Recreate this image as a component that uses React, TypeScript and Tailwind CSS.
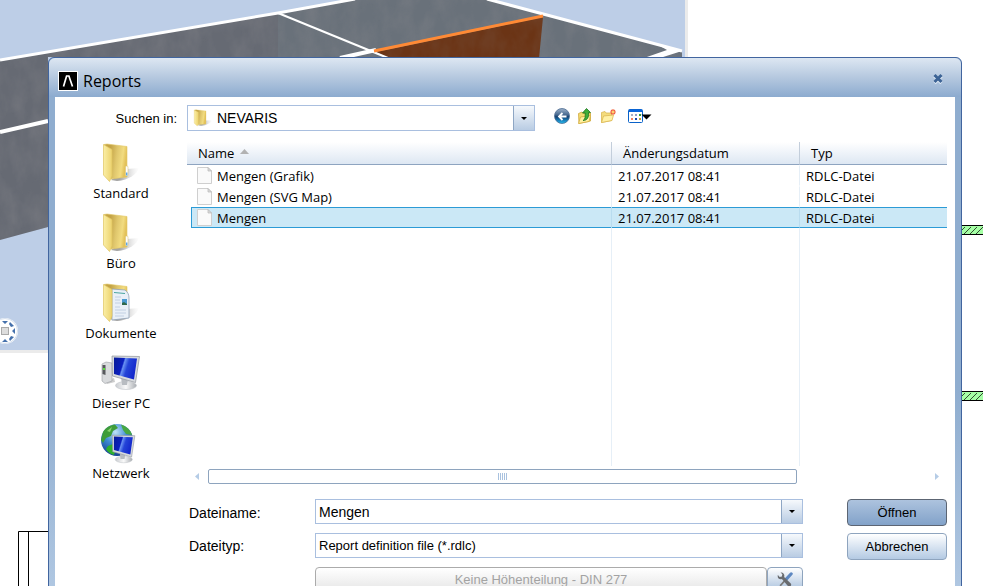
import { useState } from "react";
import type { ReactNode } from "react";

interface ReportFile {
  name: string;
  modified: string;
  type: string;
}

const FILES: ReportFile[] = [
  { name: "Mengen (Grafik)", modified: "21.07.2017 08:41", type: "RDLC-Datei" },
  { name: "Mengen (SVG Map)", modified: "21.07.2017 08:41", type: "RDLC-Datei" },
  { name: "Mengen", modified: "21.07.2017 08:41", type: "RDLC-Datei" },
];

const ARIAL = "font-['Liberation_Sans',sans-serif]";
const SEGOE = "font-['Open_Sans','Noto_Sans',sans-serif]";

/* ---------- canvas behind the dialog ---------- */

function ModelViewport() {
  return (
    <svg className="absolute left-0 top-0" width="688" height="353" viewBox="0 0 688 353" aria-hidden="true">
      <defs>
        <filter id="concrete" x="0" y="0" width="100%" height="100%">
          <feTurbulence type="fractalNoise" baseFrequency="0.06 0.035" numOctaves="4" seed="4" />
          <feColorMatrix values="0 0 0 0 0.25  0 0 0 0 0.25  0 0 0 0 0.27  0.6 0 0 0 -0.2" />
          <feComposite in2="SourceGraphic" operator="in" />
        </filter>
      </defs>
      <rect width="688" height="353" fill="#ebebeb" />
      <rect width="685" height="350" fill="#bdcee7" />
      <path d="M0 60 355 0H487L682 52V57H48V227L0 240Z" fill="#666a73" />
      <path d="M278 14 355 0H487L682 52V57H278Z" fill="#69717a" />
      <path d="M0 60 355 0H487L682 52V57H48V227L0 240Z" filter="url(#concrete)" />
      <path d="M376 52 543 17 539 58H388Z" fill="#6b3415" />
      <path d="M376 52 543 17 539 58H388Z" filter="url(#concrete)" opacity=".4" />
      <path d="M0 60 278 13 355-1M487-1 682 51" stroke="#fff" strokeWidth="3" fill="none" />
      <path d="M278 13 388 58" stroke="#fff" strokeWidth="2" fill="none" />
      <path d="M340 58 376 50M0 132 48 121" stroke="#fff" strokeWidth="4" fill="none" />
      <path d="M644 58 667 50 660 46 682 51 660 58Z" fill="#fff" />
      <path d="M374 51 543 16" stroke="#ff8a35" strokeWidth="3" />
      <circle cx="5" cy="331" r="13" fill="#fff" />
      <circle cx="5" cy="331" r="12.5" fill="none" stroke="#d5e0ee" />
      <rect x="1.500" y="327.500" width="7" height="7" fill="#ddd" stroke="#aaa" />
      <path d="M2 321h6l-3 3zM2 342h6l-3-3zM15 328v6l-3-3zM10 322l4 4-3 1-2-3zM10 341l4-4-3-1-2 3z" fill="#4571ac" />
    </svg>
  );
}

function HatchedWall() {
  return (
    <svg className="block" width="22" height="10" viewBox="0 0 22 10" aria-hidden="true">
      <path d="M0 0H22V10H0Z" fill="#a5ffa5" />
      <path d="M0 .5H22M0 9.500H22" stroke="#000" />
      <path d="M1 5 4 2M3 9 10 2M9 9 16 2M15 9 22 2" stroke="#000" strokeWidth=".7" fill="none" />
    </svg>
  );
}

function PlanCorner() {
  return (
    <svg className="absolute left-[18px] top-[531px]" width="31" height="60" aria-hidden="true">
      <path d="M31 .5H.5V60M10.500 0V60" stroke="#000" fill="none" />
    </svg>
  );
}

/* ---------- icons ---------- */

function AppLogo() {
  return (
    <svg width="20" height="20" viewBox="0 0 20 20" aria-hidden="true">
      <rect width="20" height="20" fill="#fff" />
      <rect x="1" y="1" width="18" height="18" fill="#000" />
      <path d="M5.500 15.500 8.600 5h2.300l3.600 10.500" stroke="#fff" strokeWidth="1.700" fill="none" />
    </svg>
  );
}

function FolderShapes({ children }: { children?: ReactNode }) {
  return (
    <>
      <defs>
        <linearGradient id="folderFront" x1="0" x2="1">
          <stop offset="0" stopColor="#fbefa6" />
          <stop offset="1" stopColor="#ecd26d" />
        </linearGradient>
        <linearGradient id="folderBack" x1="0" x2="1" y2=".2">
          <stop offset=".3" stopColor="#c4a447" />
          <stop offset=".6" stopColor="#e0c76d" />
          <stop offset=".85" stopColor="#f2dc80" />
          <stop offset="1" stopColor="#e3c25a" />
        </linearGradient>
        <linearGradient id="folderShade" x1="0" x2="1">
          <stop offset=".3" stopColor="#666" stopOpacity=".6" />
          <stop offset="1" stopColor="#bbb" stopOpacity="0" />
        </linearGradient>
      </defs>
      <path d="M14 38 30 27 42 26C40 32 32 38 20 39Z" fill="url(#folderShade)" />
      <path d="M7 2.500 10 2 30 4.500V35L14 37Z" fill="url(#folderBack)" stroke="#e3c866" strokeWidth=".6" />
      {children}
      <path d="M6.500 2.500 15 7.500V34L12.500 39.500 6.500 33Z" fill="url(#folderFront)" stroke="#dfc462" strokeWidth=".7" />
    </>
  );
}

function FolderIcon() {
  return (
    <svg width="48" height="42" viewBox="0 0 48 42" aria-hidden="true">
      <FolderShapes>
        <rect x="28.500" y="24" width="2.500" height="10" rx="1" fill="#fff" stroke="#d8c06a" strokeWidth=".5" />
        <path d="M29.700 30.500v3" stroke="#5ba5e8" strokeWidth="1.500" />
      </FolderShapes>
    </svg>
  );
}

function DocumentsIcon() {
  return (
    <svg width="48" height="42" viewBox="0 0 48 42" aria-hidden="true">
      <FolderShapes>
        <path d="M15 7 28 8C31 10 32 13 32 16V36L15 38Z" fill="#e9f0f8" stroke="#8fa1b6" strokeWidth=".8" />
        <path d="M17 10.500 28 11.500" stroke="#4ba6a0" />
        <path d="M18 15h6M18 18h5M18 21h6M18 28h11M18 31h11M18 34h9M18 25h5" stroke="#b7c8dd" strokeWidth=".8" />
        <path d="M25 17h5v6h-5z" fill="#4b9ad1" />
        <path d="M25 21 27 20 30 22V23H25Z" fill="#30694c" />
      </FolderShapes>
    </svg>
  );
}

function MonitorShapes() {
  return (
    <>
      <defs>
        <linearGradient id="screen" x1="0" x2="1" y2=".3">
          <stop offset="0" stopColor="#081c96" />
          <stop offset=".42" stopColor="#0b1fc0" />
          <stop offset=".48" stopColor="#6a92f2" />
          <stop offset=".65" stopColor="#2444d8" />
          <stop offset="1" stopColor="#1428cc" />
        </linearGradient>
        <linearGradient id="stand" x1="0" x2="1">
          <stop offset="0" stopColor="#c9ccd0" />
          <stop offset=".5" stopColor="#fafafa" />
          <stop offset="1" stopColor="#a9adb2" />
        </linearGradient>
      </defs>
      <ellipse cx="29" cy="33.500" rx="10.500" ry="4" fill="url(#stand)" stroke="#bfc3c8" strokeWidth=".6" />
      <path d="M24 25 31 26 30 33H25Z" fill="#b8bcc1" />
      <path d="M15 4 42.500 4.500 38.500 30.500 15.500 24Z" fill="#d7dade" stroke="#8f949b" strokeWidth=".7" />
      <path d="M17 5.500 40 6.500 37 27.500 17 22Z" fill="url(#screen)" />
    </>
  );
}

function ComputerIcon() {
  return (
    <svg width="48" height="42" viewBox="0 0 48 42" aria-hidden="true">
      <path d="M8 29 17 26 18 30 10 32Z" fill="#ccc" />
      <path d="M5 12 9 10 15 11V29L8 31.500 5 29Z" fill="#d9dbdd" stroke="#9b9ea2" strokeWidth=".6" />
      <path d="M5.500 13 8.500 13V23L5.500 22Z" fill="#57595c" />
      <path d="M6 17h2" stroke="#58e03c" strokeWidth="2" />
      <MonitorShapes />
    </svg>
  );
}

function NetworkIcon() {
  return (
    <svg width="48" height="42" viewBox="0 0 48 42" aria-hidden="true">
      <defs>
        <radialGradient id="globe" cx=".45" cy=".25" r=".8">
          <stop offset="0" stopColor="#bfe3f8" />
          <stop offset=".45" stopColor="#3f8bd4" />
          <stop offset="1" stopColor="#123a86" />
        </radialGradient>
      </defs>
      <circle cx="20" cy="18" r="16" fill="url(#globe)" />
      <path d="M6 10C9 5 14 3 18 2.500L21 6 16 9 14 14 9 16 6 21 4 18Z" fill="#3f9d3a" />
      <path d="M24 2.500C29 4 34 8 35 13L29 12 26 8Z" fill="#48a843" />
      <path d="M11 24 16 22 19 26 17 33C13 32 10 29 9 27Z" fill="#2fb12c" />
      <path d="M10 9 15 5 13 10Z" fill="#8bd56f" />
      <g transform="translate(3 10) scale(.82)">
        <MonitorShapes />
      </g>
    </svg>
  );
}

function SmallFolderIcon() {
  return (
    <svg width="22" height="18" viewBox="2 0 44 42" preserveAspectRatio="none" aria-hidden="true">
      <FolderShapes />
    </svg>
  );
}

function FileIcon() {
  return (
    <svg className="shrink-0" width="16" height="17" viewBox="0 0 16 17" aria-hidden="true">
      <path d="M.5.500H11L14.500 4V16.500H.5Z" fill="#fafafa" stroke="#cfcfcf" />
      <path d="M11 .5V4h3.500Z" fill="#ddd" stroke="#b5b5b5" strokeWidth=".7" />
    </svg>
  );
}

function BackIcon() {
  return (
    <svg width="16" height="16" viewBox="0 0 16 16" aria-hidden="true">
      <defs>
        <linearGradient id="backBall" y2="1" x2="0">
          <stop offset="0" stopColor="#9fb3cb" />
          <stop offset=".42" stopColor="#48698f" />
          <stop offset=".55" stopColor="#154070" />
          <stop offset=".75" stopColor="#1673ad" />
          <stop offset="1" stopColor="#27c0f5" />
        </linearGradient>
      </defs>
      <circle cx="8" cy="8" r="7.500" fill="url(#backBall)" stroke="#4a6b92" strokeWidth=".8" />
      <path d="M12.500 8.500H5M8.500 5 5 8.500 8.500 12" stroke="#fff" strokeWidth="1.800" fill="none" />
    </svg>
  );
}

function UpIcon() {
  return (
    <svg width="16" height="16" viewBox="0 0 16 16" aria-hidden="true">
      <path d="M1.500 5.500 5 4 6 5.500 13.500 5V13L2 15.500Z" fill="#f3dc71" stroke="#cfa73c" strokeWidth=".8" />
      <path d="M1.500 15.500 3.500 9 13.500 7.500 12 13.500Z" fill="#fff0a0" stroke="#d3ac3f" strokeWidth=".8" />
      <path d="M6 12.500C8.500 11.500 8.200 8 8.200 5H5.500L9.500.500 13.500 4.500H11.500C12 9 10.500 12.500 6 12.500Z" fill="#3fae38" stroke="#1c7420" strokeWidth=".8" />
    </svg>
  );
}

function NewFolderIcon() {
  return (
    <svg width="16" height="16" viewBox="0 0 16 16" aria-hidden="true">
      <path d="M1.500 14.500V4.500L5 3.500 6 5H11.500V12.500Z" fill="#f4dc7c" stroke="#d9b756" strokeWidth=".8" />
      <path d="M1.500 14.500 3.500 8 13.500 7 12 12.500Z" fill="#fff1a6" stroke="#dcb853" strokeWidth=".8" />
      <path d="M13 1v6M10 4h6M11 2l4 4M15 2l-4 4" stroke="#f0603a" strokeWidth="1.100" />
      <circle cx="13" cy="4" r="1.200" fill="#ffd76b" />
    </svg>
  );
}

function ViewsIcon() {
  return (
    <svg width="24" height="16" viewBox="0 0 24 16" aria-hidden="true">
      <rect x=".5" y="1.500" width="14" height="13" rx="1" fill="#fff" stroke="#0a62c9" />
      <path d="M1 1.500H14V4H1Z" fill="#0a66dc" />
      <path d="M3 6h2v2H3z" fill="#a9afc4" />
      <path d="M7 6h2v2H7z" fill="#8d9fc9" />
      <path d="M11 6h2v2H11z" fill="#2f9f3a" />
      <path d="M3 10h2v2H3z" fill="#f07f62" />
      <path d="M7 10h2v2H7z" fill="#1748b0" />
      <path d="M11 10h2v2H11z" fill="#c2a13a" />
      <path d="M13.500 6.500H23.500L18.500 11.500Z" fill="#000" />
    </svg>
  );
}

function ToolsIcon() {
  return (
    <svg width="16" height="18" viewBox="0 0 18 18" aria-hidden="true">
      <path d="M16 2 10.500 8" stroke="#5d88c2" strokeWidth="3.500" strokeLinecap="round" />
      <path d="M9.500 9 3.500 15.500" stroke="#777" strokeWidth="2" />
      <path d="M1 3.500 3 5.500 5.500 5 6 2.500 4 .500C7 0 9 2.500 8 5.500L15.500 13C17 15 14.500 17.500 12.500 16L5.500 8C2.500 9 0 6.500 1 3.500Z" fill="#686b6f" />
    </svg>
  );
}

function DownArrow() {
  return (
    <svg width="6" height="3" viewBox="0 0 6 3" aria-hidden="true">
      <path d="M0 0H6L3 3Z" fill="#000" />
    </svg>
  );
}

const PLACES = [
  { label: "Standard", icon: <FolderIcon /> },
  { label: "Büro", icon: <FolderIcon /> },
  { label: "Dokumente", icon: <DocumentsIcon /> },
  { label: "Dieser PC", icon: <ComputerIcon /> },
  { label: "Netzwerk", icon: <NetworkIcon /> },
];

const TOOLS = [
  { label: "Zurück", icon: <BackIcon /> },
  { label: "Übergeordneter Ordner", icon: <UpIcon /> },
  { label: "Neuer Ordner", icon: <NewFolderIcon /> },
];

const ARROW_BOX =
  "flex w-[21px] items-center justify-center border-l border-[#8ea6c4] bg-linear-to-b from-[#f6f9fc] to-[#b9cce3]";

/* ---------- dialog parts ---------- */

function FileTable({ selected, onSelect }: { selected: string; onSelect: (name: string) => void }) {
  const headCell = "h-[23px] border-b border-[#8ea4c0] p-0 text-left font-normal";
  return (
    <table className={`w-full table-fixed border-separate border-spacing-0 text-[13px] leading-4 ${SEGOE}`}>
      <colgroup>
        <col />
        <col className="w-[188px]" />
        <col className="w-[147px]" />
      </colgroup>
      <thead className="bg-linear-to-b from-white to-[#dce6f2]">
        <tr>
          <th className={`${headCell} border-r border-r-[#c3cedb] pl-[11px]`}>
            <span className="flex items-center gap-1.5">
              Name
              <svg className="mb-1" width="9" height="5" aria-hidden="true">
                <path d="M0 5 4.500 0 9 5Z" fill="#b2b2b2" />
              </svg>
            </span>
          </th>
          <th className={`${headCell} border-r border-r-[#c3cedb] pl-[11px]`}>Änderungsdatum</th>
          <th className={`${headCell} pl-[11px]`}>Typ</th>
        </tr>
      </thead>
      <tbody>
        {FILES.map((file) => {
          const active = file.name === selected;
          const cell = active ? "border-y border-y-[#2c9bd6] bg-[#cbe8f6]" : "border-y border-y-transparent";
          const divider = active ? "border-r-[#b9dcef]" : "border-r-[#e6eff7]";
          return (
            <tr key={file.name} onClick={() => onSelect(file.name)} aria-selected={active}>
              <td className={`border-r py-0 pl-1 pr-0 ${divider}`}>
                <div className={`flex h-[21px] items-center gap-1 border-l pl-[5px] ${cell} ${active ? "border-l-[#2c9bd6]" : "border-l-transparent"}`}>
                  <FileIcon />
                  {file.name}
                </div>
              </td>
              <td className={`h-[21px] border-r py-0 pl-1.5 pr-0 ${divider} ${cell}`}>{file.modified}</td>
              <td className={`h-[21px] py-0 pl-1.5 pr-0 ${cell}`}>{file.type}</td>
            </tr>
          );
        })}
        <tr aria-hidden="true">
          <td className="h-[238px] border-r border-[#e6eff7] p-0" />
          <td className="border-r border-[#e6eff7] p-0" />
          <td className="p-0" />
        </tr>
      </tbody>
    </table>
  );
}

function HorizontalScroll() {
  return (
    <div className="mt-[3px] flex h-[15px] items-center pl-2 pr-2">
      <svg width="4" height="7" aria-hidden="true">
        <path d="M4 0V7L0 3.500Z" fill="#b5cce6" />
      </svg>
      <div className="ml-[9px] mr-[138px] flex h-[15px] flex-1 items-center justify-center gap-px rounded-xs border border-[#8ea4be] bg-white">
        {[0, 1, 2, 3, 4].map((n) => (
          <span key={n} className="h-[7px] w-px bg-[#a9c2df]" />
        ))}
      </div>
      <svg width="4" height="7" aria-hidden="true">
        <path d="M0 0V7L4 3.500Z" fill="#b5cce6" />
      </svg>
    </div>
  );
}

export default function App() {
  const [fileName, setFileName] = useState("Mengen");

  return (
    <main className="relative h-screen overflow-hidden bg-white pl-12 pr-[21px] pt-[57px] text-black">
      <ModelViewport />
      <PlanCorner />
      <div className="absolute right-0 top-[225px] flex flex-col gap-[156px]">
        <HatchedWall />
        <HatchedWall />
      </div>

      <section
        role="dialog"
        aria-labelledby="dialog-title"
        className="relative rounded-t-md border border-[#41659f] bg-linear-to-b from-[#8fadcf] from-55% to-[#bbd0e8] px-1.5"
      >
        <header className="-mx-1.5 flex h-[39px] items-center rounded-t-md bg-linear-to-b from-[#dde7f2] via-[#b5c8df] to-[#8cabcf] pl-[9px] pr-[17px] pt-[7px]">
          <AppLogo />
          <h1 id="dialog-title" className={`ml-[5px] flex-1 text-[16px] leading-6 ${SEGOE}`}>
            Reports
          </h1>
          <button type="button" aria-label="Schließen" className="mb-1">
            <svg width="12" height="12" viewBox="0 0 12 12" aria-hidden="true">
              <path d="M2.500 3 9.500 10M9.500 3 2.500 10" stroke="#dfe9f4" strokeWidth="3.500" />
              <path d="M2.500 2 9.500 9M9.500 2 2.500 9" stroke="#3d6496" strokeWidth="3" />
            </svg>
          </button>
        </header>

        <div className={`h-[560px] bg-white pr-2 pt-2 text-[13px] leading-4 ${ARIAL}`}>
          <div className="flex h-[26px] items-center">
            <label htmlFor="look-in" className="w-[132px] pr-2.5 pt-0.5 text-right">
              Suchen in:
            </label>
            <div className="relative flex h-[26px] w-[348px] border border-[#a9bfdf]">
              <select id="look-in" className="w-full appearance-none bg-white pl-[29px] text-[14px] outline-none">
                <option>NEVARIS</option>
              </select>
              <span className="pointer-events-none absolute left-1 top-[3px]">
                <SmallFolderIcon />
              </span>
              <span className={`pointer-events-none absolute inset-y-0 right-0 ${ARROW_BOX}`}>
                <DownArrow />
              </span>
            </div>
            <div className="ml-[19px] flex items-center gap-[7px] pb-1">
              {TOOLS.map((tool) => (
                <button key={tool.label} type="button" aria-label={tool.label}>
                  {tool.icon}
                </button>
              ))}
              <button type="button" aria-label="Ansichten" className="ml-[5px]">
                <ViewsIcon />
              </button>
            </div>
          </div>

          <div className="mt-[11px] flex">
            <nav className={`flex w-[132px] shrink-0 flex-col gap-2.5 ${SEGOE}`}>
              {PLACES.map((place) => (
                <button key={place.label} type="button" className="flex flex-col items-center leading-[18px]">
                  {place.icon}
                  {place.label}
                </button>
              ))}
            </nav>

            <div className="min-w-0 flex-1">
              <FileTable selected={fileName} onSelect={setFileName} />
              <HorizontalScroll />

              <div className="mt-[15px] flex items-start gap-11 pl-0.5">
                <div className="grid flex-1 grid-cols-[126px_1fr] items-center gap-y-[9px]">
                  <label htmlFor="file-name" className="pt-0.5 text-[14px]">
                    Dateiname:
                  </label>
                  <div className="flex h-[25px] border border-[#a9bfdf]">
                    <input
                      id="file-name"
                      value={fileName}
                      onChange={(e) => setFileName(e.target.value)}
                      className="min-w-0 flex-1 px-[3px] text-[14px] outline-none"
                    />
                    <button type="button" aria-label="Dateinamen anzeigen" className={ARROW_BOX}>
                      <DownArrow />
                    </button>
                  </div>

                  <label htmlFor="file-type" className="text-[14px]">
                    Dateityp:
                  </label>
                  <div className="relative flex h-[25px] border border-[#a9bfdf]">
                    <select id="file-type" className="w-full appearance-none bg-white pl-[3px] outline-none">
                      <option>Report definition file (*.rdlc)</option>
                    </select>
                    <span className={`pointer-events-none absolute inset-y-0 right-0 ${ARROW_BOX}`}>
                      <DownArrow />
                    </span>
                  </div>

                  <div className="col-start-2 flex h-[25px]">
                    <button
                      type="button"
                      disabled
                      className="flex-1 rounded-sm border border-[#ababab] bg-linear-to-b from-white to-[#e6e6e6] text-[#a3a3a3]"
                    >
                      Keine Höhenteilung - DIN 277
                    </button>
                    <button
                      type="button"
                      aria-label="Einstellungen"
                      className="flex w-9 items-center justify-center rounded-sm border border-[#8ea4be] bg-linear-to-b from-white to-[#a9c1dd]"
                    >
                      <ToolsIcon />
                    </button>
                  </div>
                </div>

                <div className="flex w-[100px] flex-col gap-[7px]">
                  <button
                    type="button"
                    className="h-[27px] rounded-sm border border-[#5c6573] bg-linear-to-b from-[#adc3de] to-[#82a2c9]"
                  >
                    Öffnen
                  </button>
                  <button
                    type="button"
                    className="h-[27px] rounded-sm border border-[#8ea4be] bg-linear-to-b from-white to-[#b4cae3]"
                  >
                    Abbrechen
                  </button>
                </div>
              </div>
            </div>
          </div>
        </div>
      </section>
    </main>
  );
}
